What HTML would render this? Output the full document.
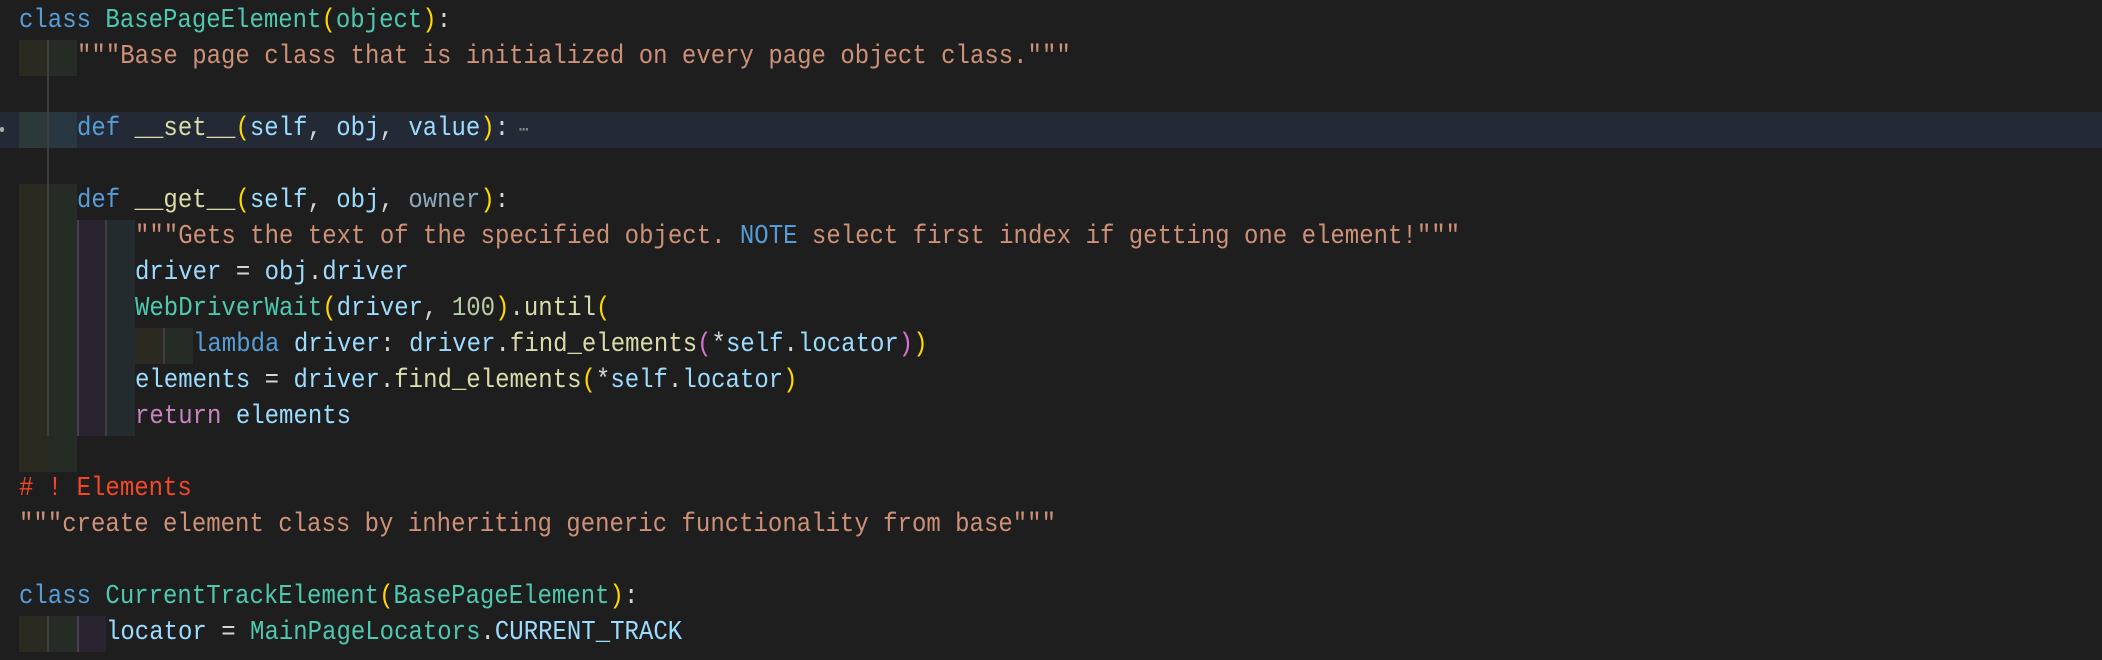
<!DOCTYPE html>
<html><head><meta charset="utf-8"><style>
html,body{margin:0;padding:0;background:#1e1e1e;width:2102px;height:660px;overflow:hidden}
.r{position:absolute;left:0;height:36px;line-height:36px;width:2102px;font-family:"Liberation Mono",monospace;font-size:24px;color:#d4d4d4;white-space:pre}
.t{position:absolute;top:0;transform:scaleY(1.1);transform-origin:0 60%}
.b{position:absolute;top:0;height:36px;width:29px}
.y{background:#2a2a21}.g{background:#252c25}.p{background:#2a2430}.u{background:#232b2e}
.l{position:absolute;top:0;height:36px;width:2px;background:#3e3e3e}
.k{color:#569cd6}.c{color:#4ec9b0}.pa{color:#ffd700}.pp{color:#da70d6}.v{color:#9cdcfe}.s{color:#ce9178}.f{color:#dcdcaa}.n{color:#b5cea8}.rt{color:#c586c0}.cm{color:#f44725}.ow{color:#8fa9bd}
</style></head><body>
<div class="r" style="top:4px"><span class="t" style="left:19px"><span class="k">class</span> <span class="c">BasePageElement</span><span class="pa">(</span><span class="c">object</span><span class="pa">)</span>:</span></div>
<div class="r" style="top:40px"><div class="b y" style="left:19px"></div><div class="b g" style="left:48px"></div><div class="l" style="left:47px"></div><span class="t s" style="left:77px">"""Base page class that is initialized on every page object class."""</span></div>
<div class="r" style="top:76px"><div class="l" style="left:47px"></div></div>
<div class="r" style="top:112px;background:#232a36"><div class="b" style="left:19px;background:#2d3838"></div><div class="b" style="left:48px;background:#293840"></div><div class="l" style="left:47px"></div><div style="position:absolute;left:0;top:15px;width:4px;height:5px;background:#aaa;border-radius:2px"></div><span class="t" style="left:77px"><span class="k">def</span> <span class="f">__set__</span><span class="pa">(</span><span class="v">self</span>, <span class="v">obj</span>, <span class="v">value</span><span class="pa">)</span>:<span style="color:#888;font-size:16px"> ⋯</span></span></div>
<div class="r" style="top:148px"><div class="l" style="left:47px"></div></div>
<div class="r" style="top:184px"><div class="b y" style="left:19px"></div><div class="b g" style="left:48px"></div><div class="l" style="left:47px"></div><span class="t" style="left:77px"><span class="k">def</span> <span class="f">__get__</span><span class="pa">(</span><span class="v">self</span>, <span class="v">obj</span>, <span class="ow">owner</span><span class="pa">)</span>:</span></div>

<div class="r" style="top:220px"><div class="b y" style="left:19px"></div><div class="b g" style="left:48px"></div><div class="b p" style="left:77px"></div><div class="b u" style="left:106px"></div><div class="l" style="left:47px"></div><div class="l" style="left:77px;background:#4a3f4f"></div><div class="l" style="left:105px"></div><span class="t s" style="left:135px">"""Gets the text of the specified object. <span class="k">NOTE</span> select first index if getting one element!"""</span></div>
<div class="r" style="top:256px"><div class="b y" style="left:19px"></div><div class="b g" style="left:48px"></div><div class="b p" style="left:77px"></div><div class="b u" style="left:106px"></div><div class="l" style="left:47px"></div><div class="l" style="left:77px;background:#4a3f4f"></div><div class="l" style="left:105px"></div><span class="t" style="left:135px"><span class="v">driver</span> = <span class="v">obj</span>.<span class="v">driver</span></span></div>
<div class="r" style="top:292px"><div class="b y" style="left:19px"></div><div class="b g" style="left:48px"></div><div class="b p" style="left:77px"></div><div class="b u" style="left:106px"></div><div class="l" style="left:47px"></div><div class="l" style="left:77px;background:#4a3f4f"></div><div class="l" style="left:105px"></div><span class="t" style="left:135px"><span class="c">WebDriverWait</span><span class="pa">(</span><span class="v">driver</span>, <span class="n">100</span><span class="pa">)</span>.<span class="f">until</span><span class="pa">(</span></span></div>
<div class="r" style="top:328px"><div class="b y" style="left:19px"></div><div class="b g" style="left:48px"></div><div class="b p" style="left:77px"></div><div class="b u" style="left:106px"></div><div class="b y" style="left:135px"></div><div class="b g" style="left:164px"></div><div class="l" style="left:47px"></div><div class="l" style="left:77px;background:#4a3f4f"></div><div class="l" style="left:105px"></div><div class="l" style="left:163px"></div><span class="t" style="left:193px"><span class="k">lambda</span> <span class="v">driver</span>: <span class="v">driver</span>.<span class="f">find_elements</span><span class="pp">(</span>*<span class="v">self</span>.<span class="v">locator</span><span class="pp">)</span><span class="pa">)</span></span></div>
<div class="r" style="top:364px"><div class="b y" style="left:19px"></div><div class="b g" style="left:48px"></div><div class="b p" style="left:77px"></div><div class="b u" style="left:106px"></div><div class="l" style="left:47px"></div><div class="l" style="left:77px;background:#4a3f4f"></div><div class="l" style="left:105px"></div><span class="t" style="left:135px"><span class="v">elements</span> = <span class="v">driver</span>.<span class="f">find_elements</span><span class="pa">(</span>*<span class="v">self</span>.<span class="v">locator</span><span class="pa">)</span></span></div>
<div class="r" style="top:400px"><div class="b y" style="left:19px"></div><div class="b g" style="left:48px"></div><div class="b p" style="left:77px"></div><div class="b u" style="left:106px"></div><div class="l" style="left:47px"></div><div class="l" style="left:77px;background:#4a3f4f"></div><div class="l" style="left:105px"></div><span class="t" style="left:135px"><span class="rt">return</span> <span class="v">elements</span></span></div>
<div class="r" style="top:436px"><div class="b y" style="left:19px"></div><div class="b g" style="left:48px"></div></div>
<div class="r" style="top:472px"><span class="t cm" style="left:19px"># ! Elements</span></div>
<div class="r" style="top:508px"><span class="t s" style="left:19px">"""create element class by inheriting generic functionality from base"""</span></div>
<div class="r" style="top:580px"><span class="t" style="left:19px"><span class="k">class</span> <span class="c">CurrentTrackElement</span><span class="pa">(</span><span class="c">BasePageElement</span><span class="pa">)</span>:</span></div>
<div class="r" style="top:616px"><div class="b y" style="left:19px"></div><div class="b g" style="left:48px"></div><div class="b p" style="left:77px"></div><div class="l" style="left:47px"></div><div class="l" style="left:77px;background:#4a3f4f"></div><span class="t" style="left:106px"><span class="v">locator</span> = <span class="c">MainPageLocators</span>.<span class="v">CURRENT_TRACK</span></span></div>
</body></html>
